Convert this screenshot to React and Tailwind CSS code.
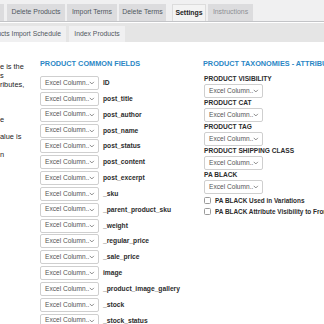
import React from "react";

const fields = [
  "ID",
  "post_title",
  "post_author",
  "post_name",
  "post_status",
  "post_content",
  "post_excerpt",
  "_sku",
  "_parent_product_sku",
  "_weight",
  "_regular_price",
  "_sale_price",
  "image",
  "_product_image_gallery",
  "_stock",
  "_stock_status",
];

const taxonomies = [
  "PRODUCT VISIBILITY",
  "PRODUCT CAT",
  "PRODUCT TAG",
  "PRODUCT SHIPPING CLASS",
  "PA BLACK",
];

const helpLines = ["e is the", "s", "ributes,", "", "", "", "e", "", "alue is", "", "n"];

function ExcelSelect() {
  return (
    <div className="w-[59px] h-[14px] shrink-0 flex items-center justify-between border border-[#cfcfcf] rounded-[2px] bg-white pl-[4px] pr-[3px]">
      <span className="text-[6.6px] text-[#555] leading-none whitespace-nowrap">Excel Column..</span>
      <svg width="6" height="4" viewBox="0 0 6 4" fill="none">
        <path d="M0.8 0.8 L3 3 L5.2 0.8" stroke="#666" strokeWidth="0.8" />
      </svg>
    </div>
  );
}

function Tab({ label, w, muted }) {
  return (
    <div
      className={
        "h-[17px] flex items-center justify-center text-[6.9px] whitespace-nowrap bg-[#dcdcde] " +
        w +
        (muted ? " text-[#8c8f94]" : " text-[#50575e]")
      }
    >
      {label}
    </div>
  );
}

export default function App() {
  return (
    <div
      className="w-[324px] h-[324px] overflow-hidden bg-white"
      style={{ fontFamily: '"Liberation Sans", Arial, sans-serif' }}
    >
      <div className="bg-[#f0f0f1] pt-[4px] border-b border-[#c3c4c7] flex items-end">
        <div className="w-[4px] h-[17px] bg-[#dcdcde]" />
        <div className="w-[3px]" />
        <Tab label="Delete Products" w="w-[58px]" />
        <div className="w-[2px]" />
        <Tab label="Import Terms" w="w-[50px]" />
        <div className="w-[2px]" />
        <Tab label="Delete Terms" w="w-[47px]" />
        <div className="w-[6px]" />
        <div className="w-[34px] h-[17px] flex items-center justify-center text-[6.9px] bg-[#f3f3f3] border border-b-0 border-[#dcdcdc] font-bold text-[#1d1d1d]">
          Settings
        </div>
        <div className="w-[2px]" />
        <Tab label="Instructions" w="w-[45px]" muted />
      </div>
      <div className="bg-[#e5e5e5] h-[19px] mt-[1px] flex items-end gap-[3px]">
        <div className="w-[66px] h-[16px] flex items-center justify-end bg-[#f0f0f1] text-[6.8px] text-[#50575e] pr-[5px] whitespace-nowrap overflow-hidden">
          ucts Import Schedule
        </div>
        <div className="w-[56px] h-[16px] flex items-center justify-center bg-[#f0f0f1] text-[6.8px] text-[#50575e] whitespace-nowrap">
          Index Products
        </div>
      </div>

      <div className="flex pt-[17px]">
        <div className="w-[40px] shrink-0 pt-[4px] text-[7.4px] leading-[8.75px] text-[#222]">
          {helpLines.map((t, i) => (
            <div key={i} className="h-[8.75px] whitespace-nowrap">
              {t || "\u00a0"}
            </div>
          ))}
        </div>

        <div className="w-[163px] shrink-0">
          <div className="text-[7.3px] font-bold text-[#2b87c5] leading-[10px] h-[10px] whitespace-nowrap">
            PRODUCT COMMON FIELDS
          </div>
          <div className="mt-[7px] flex flex-col gap-[1.85px]">
            {fields.map((f) => (
              <div key={f} className="flex items-center h-[14px]">
                <ExcelSelect />
                <span className="ml-[4px] text-[6.7px] font-bold text-[#2c2c2c] whitespace-nowrap">{f}</span>
              </div>
            ))}
          </div>
        </div>

        <div className="shrink-0">
          <div className="text-[7.3px] font-bold text-[#2b87c5] leading-[10px] h-[10px] whitespace-nowrap">
            PRODUCT TAXONOMIES - ATTRIBUTES
          </div>
          <div className="mt-[5px] flex flex-col pl-[1px]">
            {taxonomies.map((t) => (
              <div key={t} className="h-[24px] flex flex-col">
                <div className="h-[10px] text-[6.6px] font-bold text-[#2c2c2c] leading-[10px] whitespace-nowrap">{t}</div>
                <ExcelSelect />
              </div>
            ))}
            <div className="h-[1px]" />
            {["PA BLACK Used in Variations", "PA BLACK Attribute Visibility to Front"].map((t) => (
              <div key={t} className="flex items-center h-[11px]">
                <div className="w-[7px] h-[7px] border border-[#9a9a9a] rounded-[1.5px] bg-white shrink-0" />
                <span className="ml-[4px] text-[6.4px] font-bold text-[#2c2c2c] whitespace-nowrap">{t}</span>
              </div>
            ))}
          </div>
        </div>
      </div>
    </div>
  );
}
